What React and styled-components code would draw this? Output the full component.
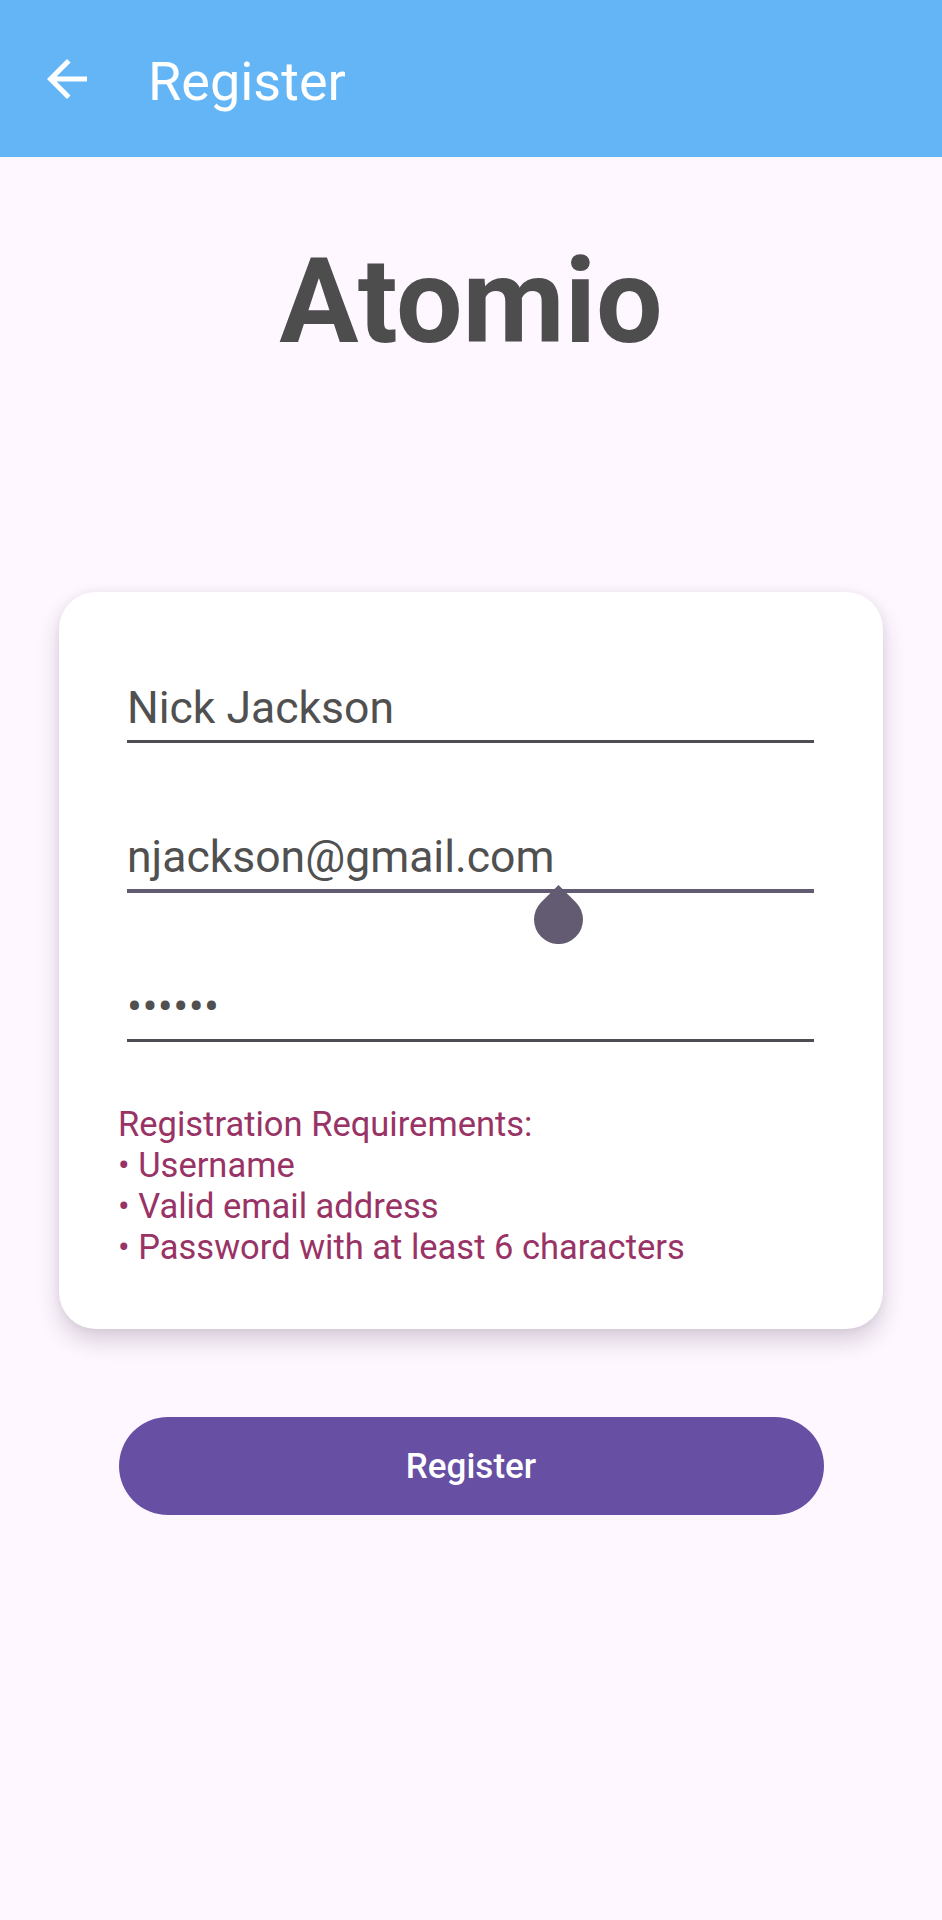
import React from "react";
import styled, { createGlobalStyle } from "styled-components";

const GlobalStyle = createGlobalStyle`
  body {
    margin: 0;
    background: #fef7ff;
    font-family: Roboto, "Liberation Sans", sans-serif;
  }
`;

const Page = styled.div`
  min-height: 1920px;
  background: #fef7ff;
`;

// TOP BAR
const AppBar = styled.header`
  height: 157px;
  background: #64b5f6;
  display: flex;
  align-items: center;
`;

const BackButton = styled.button`
  width: 60px;
  height: 60px;
  margin-left: 37px;
  padding: 0;
  border: none;
  background: transparent;
  display: flex;
  align-items: center;
  justify-content: center;
  color: #ffffff;
`;

const BarTitle = styled.h1`
  margin: 6px 0 0 51px;
  font-size: 54px;
  font-weight: 400;
  color: #ffffff;
  line-height: normal;
`;

const Brand = styled.h2`
  margin: 76px 0 0;
  text-align: center;
  font-size: 118px;
  font-weight: 700;
  line-height: 138px;
  color: #4d4d4d;
`;

// CARD WITH FIELDS
const Card = styled.section`
  margin: 221px 59px 0;
  padding: 90px 60px 61px;
  background: #ffffff;
  border-radius: 37px;
  box-shadow: 0 12px 22px rgba(60, 40, 70, 0.2), 0 0 8px rgba(60, 40, 70, 0.06);
`;

const Field = styled.div`
  position: relative;
  margin: ${(p) => (p.$first ? "0 9px 0 8px" : "88px 9px 0 8px")};
  padding-bottom: 6px;
  border-bottom: ${(p) => (p.$focused ? "4px solid #625b71" : "3px solid #4f4c53")};
`;

const FieldText = styled.div`
  font-size: 44.5px;
  line-height: 52px;
  color: #505050;
  letter-spacing: ${(p) => (p.$secret ? "0.4px" : "0")};
  white-space: nowrap;
`;

const Handle = styled.svg`
  position: absolute;
  left: 407px;
  top: 54px;
  width: 49px;
  height: 59px;
`;

const Requirements = styled.div`
  margin-top: 62px;
  margin-left: -1px;
  font-size: 34.5px;
  line-height: 41px;
  color: #993366;
`;

const Actions = styled.div`
  display: flex;
  justify-content: center;
  margin-top: 88px;
`;

const PrimaryButton = styled.button`
  width: 705px;
  height: 98px;
  border: none;
  border-radius: 49px;
  background: #6750a4;
  color: #ffffff;
  font-family: Roboto, "Liberation Sans", sans-serif;
  font-size: 35px;
  font-weight: 500;
`;

const ArrowBack = () => (
  <svg width="60" height="60" viewBox="0 0 24 24" fill="currentColor">
    <path d="M20 11H7.83l5.59-5.59L12 4l-8 8 8 8 1.41-1.41L7.83 13H20v-2z" />
  </svg>
);

const requirements = [
  "Registration Requirements:",
  "• Username",
  "• Valid email address",
  "• Password with at least 6 characters",
];

export default function App() {
  return (
    <Page>
      <GlobalStyle />
      <AppBar>
        <BackButton aria-label="Back">
          <ArrowBack />
        </BackButton>
        <BarTitle>Register</BarTitle>
      </AppBar>

      <Brand>Atomio</Brand>

      <Card>
        <Field $first>
          <FieldText>Nick Jackson</FieldText>
        </Field>
        <Field $focused>
          <FieldText>njackson@gmail.com</FieldText>
          <Handle viewBox="0 0 49 59">
            <path
              d="M24.5 0 L41.8 17.2 A24.5 24.5 0 1 1 7.2 17.2 Z"
              fill="#625b71"
            />
          </Handle>
        </Field>
        <Field>
          <FieldText $secret>••••••</FieldText>
        </Field>

        <Requirements>
          {requirements.map((line) => (
            <div key={line}>{line}</div>
          ))}
        </Requirements>
      </Card>

      <Actions>
        <PrimaryButton>Register</PrimaryButton>
      </Actions>
    </Page>
  );
}
